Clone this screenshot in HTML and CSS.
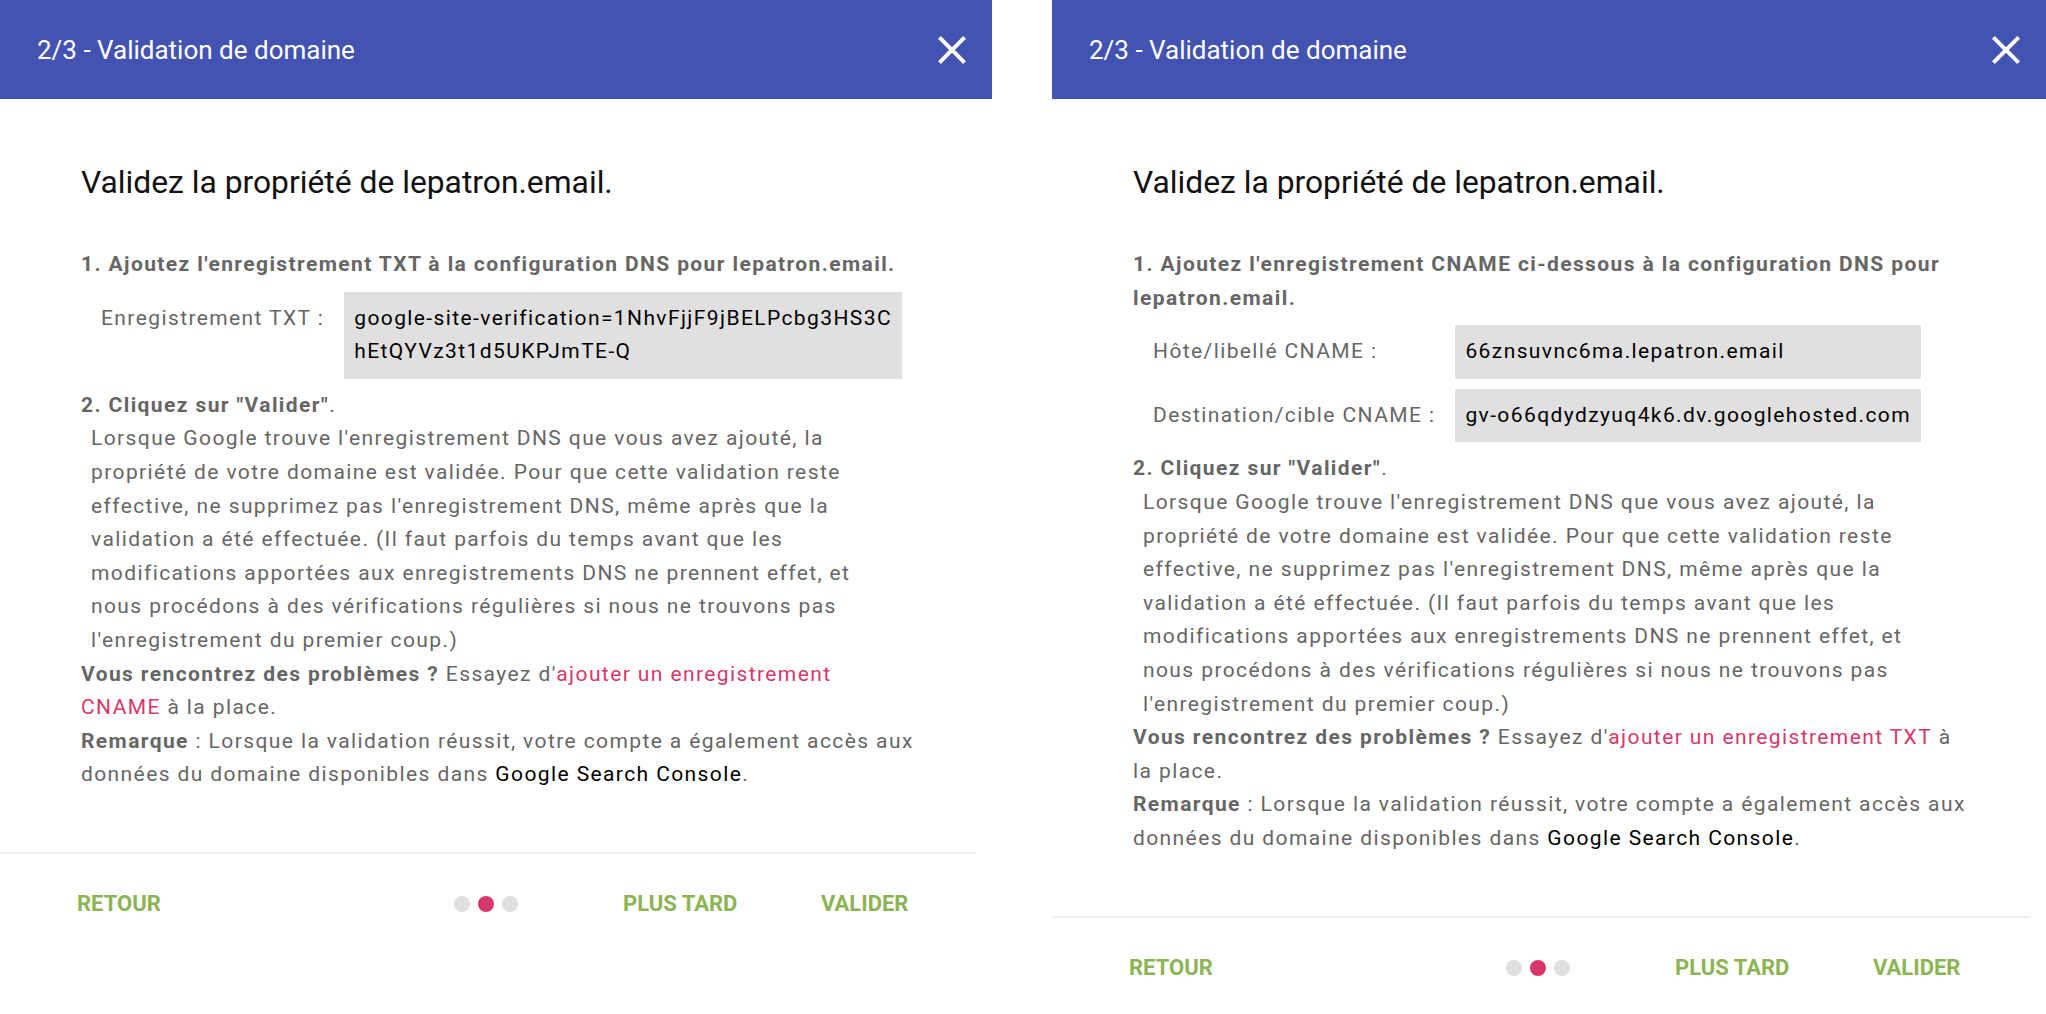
FILE: index.html
```html
<!DOCTYPE html>
<html lang="fr">
<head>
<meta charset="utf-8">
<title>Validation de domaine</title>
<link rel="stylesheet" href="styles.css">
</head>
<body>
<div class="page">
  <section class="dialog">
    <header class="dlg-head">
      <h1 class="dlg-title">2/3 - Validation de domaine</h1>
      <button class="close" aria-label="Fermer">
        <svg viewBox="0 0 24 24" width="48" height="48"><path fill="#fff" d="M19 6.41L17.59 5 12 10.59 6.41 5 5 6.41 10.59 12 5 17.59 6.41 19 12 13.41 17.59 19 19 17.59 13.41 12z"/></svg>
      </button>
    </header>
    <div class="dlg-body">
      <h2 class="lead">Validez la propriété de lepatron.email.</h2>
      <div class="step"><strong>1. Ajoutez l'enregistrement TXT à la configuration DNS pour lepatron.email.</strong></div>
      <table class="records">
        <tr><td class="rec-label">Enregistrement TXT :</td><td class="rec-value">google-site-verification=1NhvFjjF9jBELPcbg3HS3ChEtQYVz3t1d5UKPJmTE-Q</td></tr>
      </table>
      <div class="step"><strong>2. Cliquez sur "Valider"</strong>.</div>
      <p class="desc">Lorsque Google trouve l'enregistrement DNS que vous avez ajouté, la propriété de votre domaine est validée. Pour que cette validation reste effective, ne supprimez pas l'enregistrement DNS, même après que la validation a été effectuée. (Il faut parfois du temps avant que les modifications apportées aux enregistrements DNS ne prennent effet, et nous procédons à des vérifications régulières si nous ne trouvons pas l'enregistrement du premier coup.)</p>
      <p class="note"><strong>Vous rencontrez des problèmes ?</strong> Essayez d'<a class="link" href="#">ajouter un enregistrement CNAME</a>&nbsp;à la place.</p>
      <p class="note"><strong>Remarque</strong> : Lorsque la validation réussit, votre compte a également accès aux données du domaine disponibles dans <a class="plain" href="#">Google Search Console</a>.</p>
    </div>
    <footer class="dlg-foot">
      <button class="btn">Retour</button>
      <div class="dots"><span class="dot"></span><span class="dot active"></span><span class="dot"></span></div>
      <button class="btn">Plus tard</button>
      <button class="btn">Valider</button>
    </footer>
  </section>

  <section class="dialog dialog-right">
    <header class="dlg-head">
      <h1 class="dlg-title">2/3 - Validation de domaine</h1>
      <button class="close" aria-label="Fermer">
        <svg viewBox="0 0 24 24" width="48" height="48"><path fill="#fff" d="M19 6.41L17.59 5 12 10.59 6.41 5 5 6.41 10.59 12 5 17.59 6.41 19 12 13.41 17.59 19 19 17.59 13.41 12z"/></svg>
      </button>
    </header>
    <div class="dlg-body">
      <h2 class="lead">Validez la propriété de lepatron.email.</h2>
      <div class="step"><strong>1. Ajoutez l'enregistrement CNAME ci-dessous à la configuration DNS pour lepatron.email.</strong></div>
      <table class="records">
        <tr><td class="rec-label">Hôte/libellé CNAME :</td><td class="rec-value">66znsuvnc6ma.lepatron.email</td></tr>
        <tr><td class="rec-label">Destination/cible CNAME :</td><td class="rec-value">gv-o66qdydzyuq4k6.dv.googlehosted.com</td></tr>
      </table>
      <div class="step"><strong>2. Cliquez sur "Valider"</strong>.</div>
      <p class="desc">Lorsque Google trouve l'enregistrement DNS que vous avez ajouté, la propriété de votre domaine est validée. Pour que cette validation reste effective, ne supprimez pas l'enregistrement DNS, même après que la validation a été effectuée. (Il faut parfois du temps avant que les modifications apportées aux enregistrements DNS ne prennent effet, et nous procédons à des vérifications régulières si nous ne trouvons pas l'enregistrement du premier coup.)</p>
      <p class="note"><strong>Vous rencontrez des problèmes ?</strong> Essayez d'<a class="link" href="#">ajouter un enregistrement TXT</a>&nbsp;à la place.</p>
      <p class="note"><strong>Remarque</strong> : Lorsque la validation réussit, votre compte a également accès aux données du domaine disponibles dans <a class="plain" href="#">Google Search Console</a>.</p>
    </div>
    <footer class="dlg-foot">
      <button class="btn">Retour</button>
      <div class="dots"><span class="dot"></span><span class="dot active"></span><span class="dot"></span></div>
      <button class="btn">Plus tard</button>
      <button class="btn">Valider</button>
    </footer>
  </section>
</div>
</body>
</html>
```

FILE: styles.css
```css
* { box-sizing: border-box; }
html, body { margin: 0; padding: 0; background: #fff; }
body { font-family: Roboto, "Liberation Sans", Arial, sans-serif; }

.page {
  display: flex;
  gap: 60px;
  width: 2046px;
}
.dialog { width: 992px; flex: none; }
.dialog-right { flex: 1 1 auto; width: auto; }

.dlg-head {
  height: 99px;
  background: #4353b2;
  display: flex;
  align-items: center;
  justify-content: space-between;
  padding: 0 16px 0 37px;
}
.dlg-title {
  margin: 0;
  font-size: 26px;
  font-weight: 400;
  line-height: 1;
  color: #fff;
}
.close {
  width: 48px; height: 48px;
  border: 0; padding: 0; background: none;
  display: flex; align-items: center; justify-content: center;
}
.close svg { display: block; }

.dlg-body {
  padding: 65px 73px 0 81px;
  color: #666;
  font-size: 21px;
  line-height: 33.6px;
  letter-spacing: 1.4px;
}
.lead {
  margin: 0 0 48px;
  font-size: 31.8px;
  line-height: 36px;
  font-weight: 400;
  letter-spacing: 0;
  color: #111;
}
.step {
  font-size: 21px;
  line-height: 33.6px;
  color: #666;
}
.step strong { font-weight: 700; }

.records {
  border-collapse: separate;
  border-spacing: 0 10px;
  margin-right: 17px;
}
.rec-label {
  padding: 10px 20px 0 20px;
  vertical-align: top;
  white-space: nowrap;
  color: #666;
}
.rec-value {
  background: #e0e0e0;
  padding: 10px;
  color: #000;
  word-break: break-all;
}

.desc { margin: 0 18px 0 10px; }
.note { margin: 0; }
.note strong { font-weight: 700; }
.link { color: #d7386a; text-decoration: none; }
.plain { color: #000; text-decoration: none; }

.dlg-foot {
  margin-top: 60px;
  margin-right: 16px;
  border-top: 2px solid #eeeeee;
  height: 102px;
  display: grid;
  grid-template-columns: 377px 169px 198px auto;
  align-items: center;
  padding-left: 77px;
}
.btn {
  justify-self: start;
  border: 0; padding: 0; background: none;
  font-family: Roboto, "Liberation Sans", Arial, sans-serif;
  font-size: 22px;
  font-weight: 700;
  text-transform: uppercase;
  color: #8bb453;
  line-height: 1;
}
.dots { display: flex; gap: 8px; }
.dot { width: 16px; height: 16px; border-radius: 50%; background: #e0e0e0; }
.dot.active { background: #d7386a; }
```
